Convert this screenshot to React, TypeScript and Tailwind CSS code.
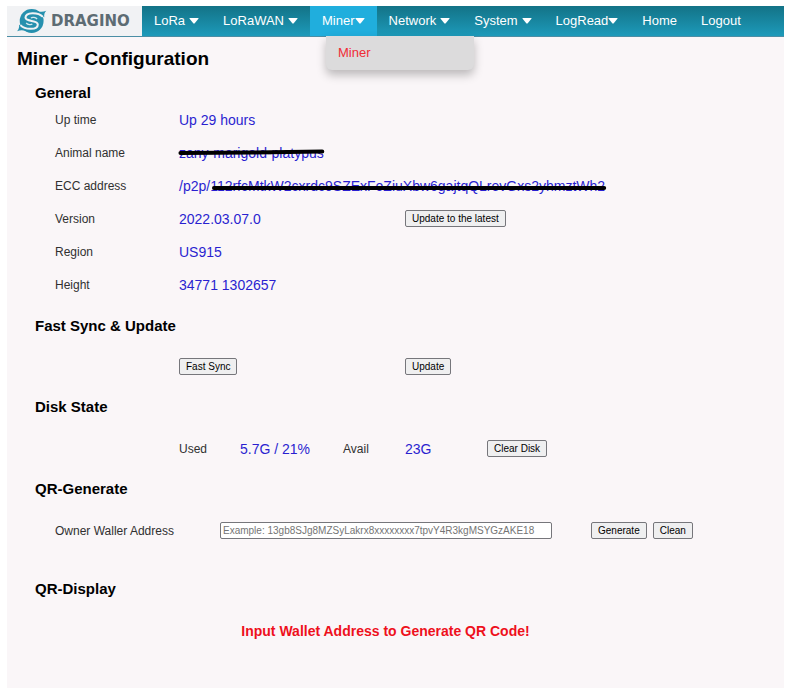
import type { ReactNode } from 'react'
import clsx from 'clsx'

const menu = [
  { label: 'LoRa', caret: 'ml-1' },
  { label: 'LoRaWAN', caret: 'ml-1' },
  { label: 'Miner', caret: 'ml-0', active: true },
  { label: 'Network', caret: 'ml-1' },
  { label: 'System', caret: 'ml-1' },
  { label: 'LogRead', caret: 'ml-0' },
  { label: 'Home' },
  { label: 'Logout' },
]

function Logo() {
  return (
    <a href="#" className="flex w-[135px] shrink-0 items-center gap-1 bg-[#f1f2f4] pl-2.5">
      <svg viewBox="-2 -4 88 82" className="h-7 w-[30px] shrink-0" fill="none" aria-hidden="true">
        {/* Disc with a tail at each end */}
        <circle cx="41" cy="37" r="35" fill="#2690ae" />
        <path d="M50 3c12 8 22 8 34 4-5 5-7 11-6 19l-14-4ZM32 71c-12-8-22-8-34-4 5-5 7-11 6-19l14 4Z" fill="#2690ae" />
        {/* S band that splits the disc into two swirls */}
        <path d="M74 25C60 10 23 10 23 27c0 13 36 7 36 20 0 17-37 17-51 2" stroke="#f1f2f4" strokeWidth="6" />
        <path d="M57 31c-5-5-14-6-18-3M25 43c5 5 14 6 18 3" stroke="#d5e8ee" strokeWidth="4" />
      </svg>
      <span className="font-['DejaVu_Sans',sans-serif] text-[15px] font-bold leading-4 text-[#5d6c73]">DRAGINO</span>
    </a>
  )
}

function NavBar() {
  return (
    <nav className="flex h-[31px] border-b border-[#4b8ea5] bg-linear-to-b from-[#137387] to-[#1d9aba]">
      <Logo />
      <ul className="flex text-[13px] text-white">
        {menu.map((item) => (
          <li key={item.label} className={clsx('relative flex', item.active && 'bg-[#20aedd]')}>
            <a href="#" className="flex items-center px-3">
              {item.label}
              {item.caret && (
                <svg viewBox="0 0 10 6" className={clsx('h-1.5 w-[10px]', item.caret)} fill="currentColor" aria-hidden="true">
                  <path d="M1 0h8q1 0 .4.8L5.700 5.300q-.7.7-1.400 0L.6.8Q0 0 1 0Z" />
                </svg>
              )}
            </a>
            {/* Open submenu */}
            {item.active && (
              <ul className="absolute left-4 top-full z-10 w-[148px] rounded-b-md bg-[#dcdbdc] shadow-[0_5px_10px_rgba(0,0,0,0.25)]">
                <li>
                  <a href="#" className="block px-3 py-2 leading-[18px] text-[#f02c35]">{item.label}</a>
                </li>
              </ul>
            )}
          </li>
        ))}
      </ul>
    </nav>
  )
}

function Button({ children }: { children: ReactNode }) {
  return (
    <button type="button" className="block h-[17px] whitespace-nowrap rounded-xs border border-[#76767b] bg-[#efeff0] px-1.5 text-[10px] leading-[14px] text-black">
      {children}
    </button>
  )
}

function Heading({ children }: { children: ReactNode }) {
  return <h2 className="flex h-[41px] items-center pl-7 text-[15px] font-bold text-black">{children}</h2>
}

function Row({ label, children }: { label?: string, children: ReactNode }) {
  return (
    <div className="grid h-[33px] grid-cols-[124fr_226fr_379fr] items-center pl-12">
      <div className="whitespace-nowrap">{label}</div>
      {children}
    </div>
  )
}

function Value({ children }: { children: ReactNode }) {
  return <div className="whitespace-nowrap text-sm text-[#2a1fd0]">{children}</div>
}

// Thick marker stroke drawn over a hidden value
function Redacted({ children, d }: { children: ReactNode, d: string }) {
  return (
    <span className="relative inline-block">
      {children}
      <svg viewBox="0 0 100 20" preserveAspectRatio="none" className="absolute inset-0 h-full w-full overflow-visible" aria-hidden="true">
        <path d={d} fill="none" stroke="#000" strokeWidth="4" strokeLinecap="round" vectorEffect="non-scaling-stroke" />
      </svg>
    </span>
  )
}

export default function App() {
  return (
    <div className="min-h-screen bg-white pb-[5px] pl-[7px] pr-[6px] pt-1.5 font-['Liberation_Sans',Arial,sans-serif] text-[12px] text-[#303030]">
      <div className="bg-[#faf6f8] pb-[37px]">
        <NavBar />

        <main>
          <h1 className="pl-2.5 pt-2.5 text-[19px] font-bold leading-6 text-black">Miner - Configuration</h1>

          {/* General */}
          <div className="pt-0.5">
            <Heading>General</Heading>
          </div>
          <div className="-mt-[11px]">
            <Row label="Up time">
              <Value>Up 29 hours</Value>
            </Row>
            <Row label="Animal name">
              <Value>
                <Redacted d="M1 10 L50 9.500 L99 8.500">zany-marigold-platypus</Redacted>
              </Value>
            </Row>
            <Row label="ECC address">
              <div className="col-span-2">
                <Value>
                  /p2p/
                  <Redacted d="M1 12 L99.800 12">112rfcMtkW2cxrdc9SZExFoZiuXbw6gajtqQLrevGxs2yhmztWh2</Redacted>
                </Value>
              </div>
            </Row>
            <Row label="Version">
              <Value>2022.03.07.0</Value>
              <div><Button>Update to the latest</Button></div>
            </Row>
            <Row label="Region">
              <Value>US915</Value>
            </Row>
            <Row label="Height">
              <Value>34771 1302657</Value>
            </Row>
          </div>

          {/* Sync */}
          <div className="pt-[5px]">
            <Heading>Fast Sync &amp; Update</Heading>
          </div>
          <div className="pb-1 pt-[3px]">
            <Row>
              <div><Button>Fast Sync</Button></div>
              <div><Button>Update</Button></div>
            </Row>
          </div>

          {/* Disk */}
          <Heading>Disk State</Heading>
          <div className="grid h-[41px] grid-cols-[61fr_103fr_62fr_82fr_297fr] items-center pl-[172px]">
            <div>Used</div>
            <Value>5.7G / 21%</Value>
            <div>Avail</div>
            <Value>23G</Value>
            <div><Button>Clear Disk</Button></div>
          </div>

          {/* QR code */}
          <Heading>QR-Generate</Heading>
          <form className="grid h-[41px] grid-cols-[165fr_371fr_193fr] items-center pl-12">
            <label htmlFor="wallet">Owner Waller Address</label>
            <div className="pr-[39px]">
              <input
                id="wallet"
                type="text"
                placeholder="Example: 13gb8SJg8MZSyLakrx8xxxxxxxx7tpvY4R3kgMSYGzAKE18"
                className="block h-[17px] w-full rounded-xs border border-[#76767b] bg-white px-0.5 text-[10px] placeholder:text-[#757575]"
              />
            </div>
            <div className="flex gap-1.5">
              <Button>Generate</Button>
              <Button>Clean</Button>
            </div>
          </form>

          <div className="pt-[18px]">
            <Heading>QR-Display</Heading>
          </div>
          <p className="flex h-[41px] items-center justify-center pr-5 text-sm font-bold text-[#ee101c]">
            Input Wallet Address to Generate QR Code!
          </p>
        </main>
      </div>
    </div>
  )
}
